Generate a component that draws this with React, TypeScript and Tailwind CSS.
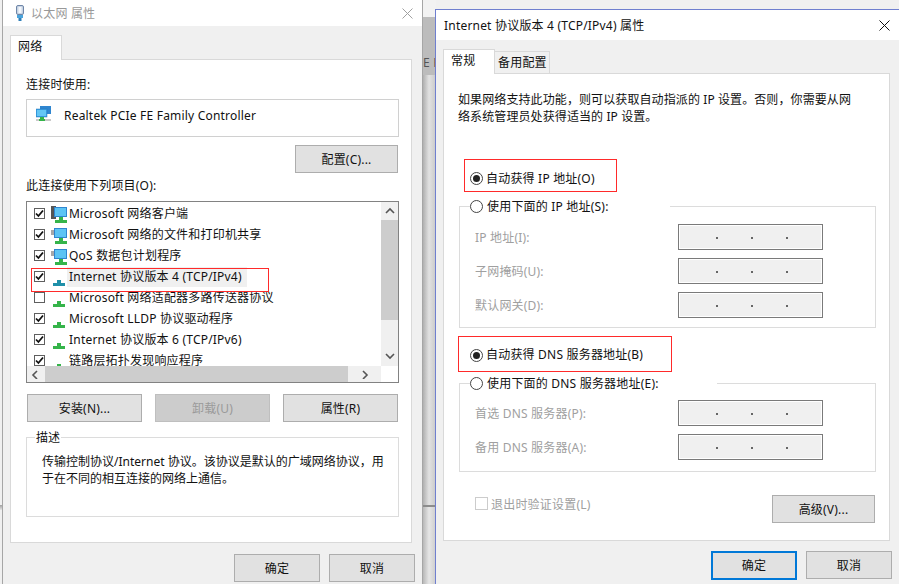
const FONT = "font-['Noto_Sans','Noto_Sans_CJK_SC',sans-serif]";

function Btn({ label, className = "", disabled = false, primary = false }: { label: string; className?: string; disabled?: boolean; primary?: boolean }) {
  return (
    <div
      className={`flex items-center justify-center h-[28px] pt-[1px] text-[12px] leading-none ${
        disabled
          ? "bg-[#cccccc] border border-[#bfbfbf] text-[#9a9a9a]"
          : primary
          ? "bg-[#e1e1e1] border-2 border-[#0078d7] text-[#111111]"
          : "bg-[#e1e1e1] border border-[#adadad] text-[#111111]"
      } ${className}`}
    >
      {label}
    </div>
  );
}

function Check({ checked, className = "" }: { checked: boolean; className?: string }) {
  return (
    <div className={`w-[11px] h-[11px] shrink-0 border border-[#5f5f5f] bg-white flex items-center justify-center ${className}`}>
      {checked && (
        <svg width="9" height="9" viewBox="0 0 9 9">
          <path d="M1 4.5 L3.4 7 L8 1.5" fill="none" stroke="#111" strokeWidth="1.8" />
        </svg>
      )}
    </div>
  );
}

function Monitor({ kind }: { kind: "client" | "share" | "proto" | "teal" | "cut" }) {
  const green = kind === "teal" ? "#1f8fa8" : "#35b44a";
  const big = kind === "client" || kind === "share";
  return (
    <svg width="17" height="18" viewBox="0 0 17 18" className="shrink-0">
      {kind === "client" && <rect x="1" y="1" width="5" height="13" fill="#555" />}
      {kind === "share" && <path d="M1 4h3V2h3v10H4V9H1z" fill="#a8a8a8" />}
      {big && (
        <>
          <rect x="4" y="2" width="13" height="10" fill="#2f86d0" />
          <rect x="5" y="3" width="11" height="8" fill="#5cc4f4" />
          <rect x="9" y="12" width="4" height="2" fill="#9aa7b0" />
        </>
      )}
      {kind === "cut" ? (
        <rect x="7" y="12" width="4" height="6" fill={green} />
      ) : (
        <>
          <rect x={big ? 9 : 7} y="12" width="4" height="3" fill={green} />
          <rect x={big ? 5 : 3} y="15" width="12" height="3" fill={green} />
        </>
      )}
    </svg>
  );
}

function Row({ text, checked, icon, hl }: { text: string; checked: boolean; icon: "client" | "share" | "proto" | "teal" | "cut"; hl?: boolean }) {
  return (
    <div className="h-[21px] flex items-center pl-[7px] shrink-0">
      <Check checked={checked} />
      <div className="ml-[5px]">
        <Monitor kind={icon} />
      </div>
      <div className={`h-[20px] flex items-center pl-[2px] pr-[5px] ${hl ? "bg-[#f0f0f0]" : ""}`}>
        <span>{text}</span>
      </div>
    </div>
  );
}

function Radio({ checked, className = "" }: { checked: boolean; className?: string }) {
  return (
    <div className={`w-[13px] h-[13px] shrink-0 rounded-full border border-[#444444] bg-white flex items-center justify-center ${className}`}>
      {checked && <div className="w-[7px] h-[7px] rounded-full bg-[#222222]" />}
    </div>
  );
}

function IpRow({ label, className = "" }: { label: string; className?: string }) {
  return (
    <div className={`flex items-center h-[26px] ${className}`}>
      <div className="w-[218px] pl-[15px] text-[#a0a0a0]">{label}</div>
      <div className="w-[145px] h-[26px] border border-[#7a7a7a] bg-[#f0f0f0] outline outline-1 -outline-offset-2 outline-white flex items-center pl-[37px] gap-[33px]">
        <div className="w-[2px] h-[2px] bg-[#666666] mt-[2px]" />
        <div className="w-[2px] h-[2px] bg-[#666666] mt-[2px]" />
        <div className="w-[2px] h-[2px] bg-[#666666] mt-[2px]" />
      </div>
    </div>
  );
}

function Legend({ text, width }: { text: string; width: string }) {
  return (
    <div className={`absolute left-[10px] -top-[9px] h-[17px] bg-white flex items-center ${width}`}>
      <Radio checked={false} />
      <span className="ml-[4px]">{text}</span>
    </div>
  );
}

function Chevron({ dir }: { dir: "up" | "down" | "left" | "right" }) {
  const d = {
    up: "M1 6 L5 2 L9 6",
    down: "M1 2 L5 6 L9 2",
    left: "M6 1 L2 5 L6 9",
    right: "M3 1 L7 5 L3 9",
  }[dir];
  return (
    <svg width="10" height="10" viewBox="0 0 10 8" className="shrink-0">
      <path d={d} fill="none" stroke="#555" strokeWidth="1.6" />
    </svg>
  );
}

export default function App() {
  return (
    <div className={`relative w-[899px] h-[584px] overflow-hidden bg-[#f0f0f0] text-[12px] tracking-[0.2px] leading-[17px] text-[#111111] ${FONT}`}>
      {/* desktop backdrop */}
      <div className="absolute left-0 top-[505px] w-[3px] h-[5px] bg-gradient-to-b from-[#a0a0a0] to-[#e6e6e6]" />
      <div className="absolute left-[422px] top-0 w-[14px] h-[584px] flex flex-col">
        <div className="h-[17px] bg-[#f2f2f2]" />
        <div className="h-[58px] bg-[#bcbcbc] pl-[1px] overflow-hidden text-[#555] text-[12px]">
          <div className="mt-[37px] whitespace-nowrap">E F</div>
        </div>
        <div className="h-[430px] bg-gradient-to-r from-[#a8a8a8] via-[#e2e2e2] to-[#c8c8c8]" />
        <div className="h-[2px] bg-[#8c8c8c]" />
        <div className="flex-1 bg-gradient-to-r from-[#b0b0b0] via-[#e6e6e6] to-[#cccccc]" />
      </div>

      {/* left window */}
      <div className="absolute left-[2px] top-0 w-[421px] h-[584px] border-x border-[#a6a6a6] flex flex-col">
        <div className="h-[26px] bg-white flex items-center shrink-0 relative">
          <svg width="10" height="16" viewBox="0 0 10 16" className="ml-[12px] shrink-0">
            <rect x="1.5" y="0.5" width="7" height="9" rx="1.5" fill="#c8d4e4" stroke="#6f86a8" />
            <rect x="3.5" y="2" width="3" height="6" fill="#f4f7fb" />
            <rect x="2" y="10" width="6" height="3" fill="#4aa4dc" />
            <rect x="3.5" y="13" width="3" height="3" fill="#2f7fb8" />
          </svg>
          <span className="ml-[6px] text-[#999999]">以太网 属性</span>
          <svg width="11" height="11" viewBox="0 0 11 11" className="ml-auto mr-[9px]">
            <path d="M0.5 0.5 L10.5 10.5 M10.5 0.5 L0.5 10.5" stroke="#a0a0a0" strokeWidth="1" />
          </svg>
        </div>
        <div className="flex-1 bg-[#f0f0f0] pl-[7px] pt-[9px] flex flex-col">
          <div className="w-[52px] h-[25px] bg-white border border-b-0 border-[#d9d9d9] pl-[7px] pt-[2px] relative z-10 -mb-px">网络</div>
          <div className="w-[402px] h-[484px] bg-white border border-[#d9d9d9] pl-[15px] pr-[12px] flex flex-col shrink-0">
            <div className="mt-[16px]">连接时使用:</div>
            <div className="mt-[6px] h-[38px] border border-[#d0d0d0] flex items-start pl-[9px] pt-[6px] shrink-0">
              <svg width="15" height="15" viewBox="0 0 15 15" className="shrink-0">
                <rect x="4" y="0" width="11" height="8" fill="#2f86d0" />
                <rect x="0" y="3" width="11" height="8" fill="#3aa0e6" stroke="#2478b8" strokeWidth="0.5" />
                <rect x="1" y="4" width="9" height="6" fill="#63c6f4" />
                <rect x="4" y="11" width="4" height="2" fill="#35b44a" />
                <rect x="0" y="13" width="15" height="2" fill="#c9c9c9" />
                <rect x="3" y="13" width="6" height="2" fill="#35b44a" />
              </svg>
              <span className="ml-[13px] mt-[1px]">Realtek PCIe FE Family Controller</span>
            </div>
            <Btn label="配置(C)..." className="w-[103px] mt-[8px] self-end mr-[1px] shrink-0" />
            <div className="mt-[4px]">此连接使用下列项目(O):</div>
            <div className="mt-[7px] h-[182px] border border-[#828282] flex flex-col shrink-0">
              <div className="flex h-[164px] shrink-0">
                <div className="flex-1 overflow-hidden flex flex-col pt-[1px]">
                  <Row text="Microsoft 网络客户端" checked icon="client" />
                  <Row text="Microsoft 网络的文件和打印机共享" checked icon="share" />
                  <Row text="QoS 数据包计划程序" checked icon="share" />
                  <Row text="Internet 协议版本 4 (TCP/IPv4)" checked icon="teal" hl />
                  <Row text="Microsoft 网络适配器多路传送器协议" checked={false} icon="proto" />
                  <Row text="Microsoft LLDP 协议驱动程序" checked icon="proto" />
                  <Row text="Internet 协议版本 6 (TCP/IPv6)" checked icon="proto" />
                  <Row text="链路层拓扑发现响应程序" checked icon="cut" />
                </div>
                <div className="w-[17px] bg-[#f0f0f0] flex flex-col items-center shrink-0">
                  <div className="h-[18px] flex items-center justify-center shrink-0"><Chevron dir="up" /></div>
                  <div className="w-full h-[100px] bg-[#cdcdcd] shrink-0" />
                  <div className="flex-1 flex items-end pb-[5px]"><Chevron dir="down" /></div>
                </div>
              </div>
              <div className="h-[16px] flex shrink-0">
                <div className="w-[354px] bg-[#f0f0f0] flex items-center">
                  <div className="w-[18px] flex justify-center"><Chevron dir="left" /></div>
                  <div className="w-[303px] h-full bg-[#cdcdcd]" />
                  <div className="flex-1 flex justify-center"><Chevron dir="right" /></div>
                </div>
                <div className="flex-1 bg-white" />
              </div>
            </div>
            <div className="mt-[11px] flex gap-[13px] ml-[1px] shrink-0">
              <Btn label="安装(N)..." className="w-[115px]" />
              <Btn label="卸载(U)" className="w-[115px]" disabled />
              <Btn label="属性(R)" className="w-[115px]" />
            </div>
            <div className="relative mt-[15px] h-[80px] border border-[#dcdcdc] pl-[15px] pr-[4px] pt-[15px] leading-[17px] tracking-normal shrink-0">
              <div className="absolute left-[8px] -top-[9px] bg-white px-[1px] leading-[17px]">描述</div>
              传输控制协议/Internet 协议。该协议是默认的广域网络协议，用<br />于在不同的相互连接的网络上通信。
            </div>
          </div>
          <div className="mt-[11px] flex gap-[9px] self-end mr-[7px]">
            <Btn label="确定" className="w-[86px]" />
            <Btn label="取消" className="w-[86px]" />
          </div>
        </div>
      </div>

      {/* right window */}
      <div className="absolute left-[435px] top-[9px] w-[464px] h-[575px] border-l border-t border-[#6f7fcf] flex flex-col">
        <div className="h-[30px] bg-white flex items-center pl-[8px] shrink-0">
          <span>Internet 协议版本 4 (TCP/IPv4) 属性</span>
          <svg width="11" height="11" viewBox="0 0 11 11" className="ml-auto mr-[9px]">
            <path d="M0.5 0.5 L10.5 10.5 M10.5 0.5 L0.5 10.5" stroke="#111" strokeWidth="1" />
          </svg>
        </div>
        <div className="flex-1 bg-[#f0f0f0] pl-[7px] pt-[9px] flex flex-col">
          <div className="flex items-end relative z-10 -mb-px">
            <div className="w-[52px] h-[25px] bg-white border border-b-0 border-[#d9d9d9] pl-[7px] pt-[2px]">常规</div>
            <div className="w-[55px] h-[23px] bg-[#f0f0f0] border border-l-0 border-[#d9d9d9] pl-[3px] pt-[2px]">备用配置</div>
          </div>
          <div className="w-[447px] h-[468px] bg-white border border-[#d9d9d9] pl-[14px] flex flex-col shrink-0">
            <div className="mt-[17px] w-[400px] leading-[17px] tracking-[0.1px]">如果网络支持此功能，则可以获取自动指派的 IP 设置。否则，你需要从网<br />络系统管理员处获得适当的 IP 设置。</div>
            <div className="mt-[34px] ml-[6px] w-[153px] h-[33px] border border-[#ff2a2a] flex items-center pl-[5px] shrink-0">
              <Radio checked className="mt-[6px]" />
              <span className="ml-[3px] mt-[6px]">自动获得 IP 地址(O)</span>
            </div>
            <div className="relative mt-[14px] ml-[1px] w-[417px] h-[122px] border border-[#dcdcdc] pt-[17px] flex flex-col gap-[8px] shrink-0">
              <Legend text="使用下面的 IP 地址(S):" width="w-[200px]" />
              <IpRow label="IP 地址(I):" />
              <IpRow label="子网掩码(U):" />
              <IpRow label="默认网关(D):" />
            </div>
            <div className="mt-[8px] w-[214px] h-[36px] border border-[#ff2a2a] flex items-center pl-[11px] shrink-0">
              <Radio checked className="mt-[2px]" />
              <span className="ml-[3px] mt-[1px]">自动获得 DNS 服务器地址(B)</span>
            </div>
            <div className="relative mt-[11px] ml-[1px] w-[417px] h-[89px] border border-[#dcdcdc] pt-[16px] flex flex-col gap-[8px] shrink-0">
              <Legend text="使用下面的 DNS 服务器地址(E):" width="w-[247px]" />
              <IpRow label="首选 DNS 服务器(P):" />
              <IpRow label="备用 DNS 服务器(A):" />
            </div>
            <div className="mt-[23px] flex items-start pr-[14px] shrink-0">
              <div className="ml-[17px] mt-[2px] w-[13px] h-[13px] border border-[#cccccc] bg-white shrink-0" />
              <span className="ml-[3px] mt-[1px] text-[#a0a0a0]">退出时验证设置(L)</span>
              <Btn label="高级(V)..." className="w-[103px] ml-auto" />
            </div>
          </div>
          <div className="mt-[10px] flex gap-[9px] ml-[268px]">
            <Btn label="确定" className="w-[86px] h-[29px]" primary />
            <Btn label="取消" className="w-[86px]" />
          </div>
        </div>
      </div>

      {/* red annotation around the IPv4 row */}
      <div className="absolute left-[31px] top-[268px] w-[238px] h-[24px] border border-[#ff2a2a]" />
    </div>
  );
}
